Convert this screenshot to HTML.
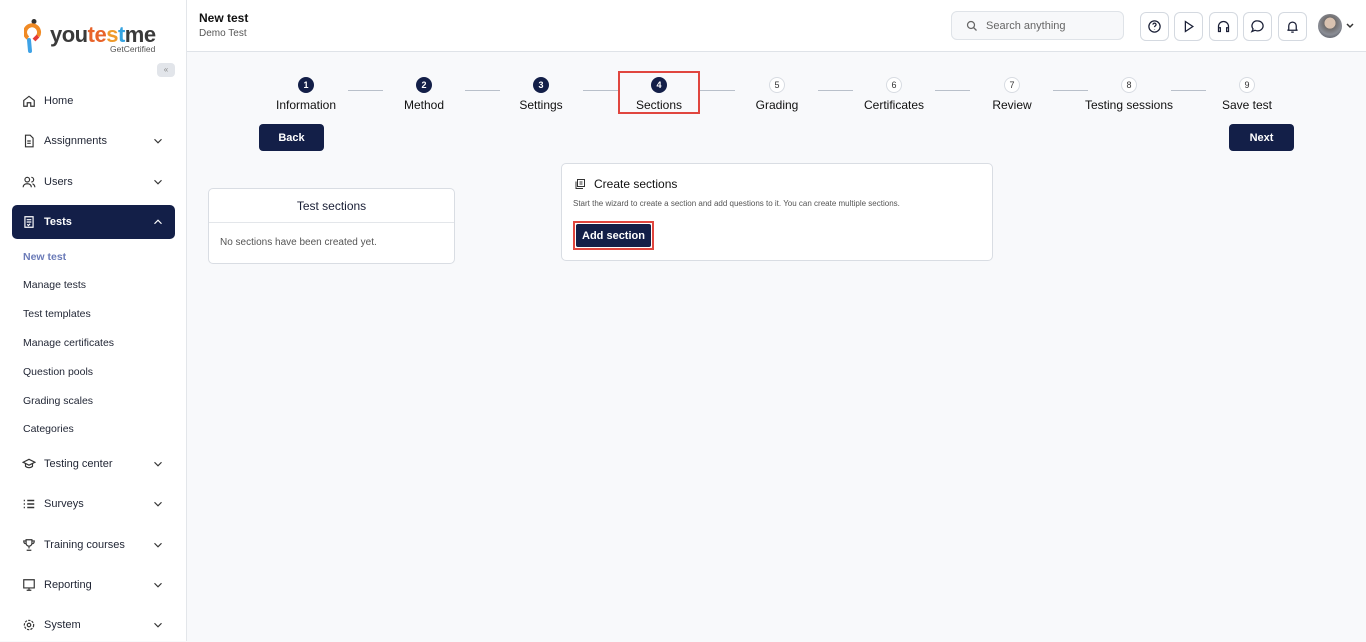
<!DOCTYPE html>
<html><head><style>
*{box-sizing:border-box;margin:0;padding:0}
body{width:1366px;height:641px;overflow:hidden;font-family:"Liberation Sans",sans-serif;background:#f8f9fb;position:relative;color:#1a1f36}
.sb{position:absolute;left:0;top:0;width:187px;height:641px;background:#fff;border-right:1px solid #e3e6ea}
.hd{position:absolute;left:187px;top:0;right:0;height:52px;background:#fff;border-bottom:1px solid #dfe3e8}
.nav{position:absolute;left:12px;width:163px;height:34px;display:flex;align-items:center;font-size:11px;color:#1f2433}
.nav svg{width:14px;height:14px;margin-left:10px;margin-right:8px}
.nav .ch{position:absolute;right:10px;top:10px;width:14px;height:14px;margin:0}
.sub{position:absolute;left:23px;font-size:10.5px;color:#1f2433}
.ib{position:absolute;top:12px;width:29px;height:29px;border:1px solid #d4d9e0;border-radius:6px;background:#fff;display:flex;align-items:center;justify-content:center}
.ib svg{width:15px;height:15px}
.st{position:absolute;top:77px;width:16px;height:16px;border-radius:50%;font-size:9px;font-weight:bold;display:flex;align-items:center;justify-content:center}
.st.a{background:#131f48;color:#fff}
.st.b{background:#fff;color:#333;border:1px solid #d8dce2;font-weight:normal}
.lb{position:absolute;top:98px;font-size:12px;color:#111;transform:translateX(-50%);white-space:nowrap}
.ln{position:absolute;top:90px;height:1px;background:#b9c0ca}
.btn{position:absolute;background:#131f48;color:#fff;font-size:11px;font-weight:bold;border-radius:4px;display:flex;align-items:center;justify-content:center}
.card{position:absolute;background:#fff;border:1px solid #d9dde3;border-radius:5px}
</style></head><body>
<div class="sb">
  <svg style="position:absolute;left:24px;top:18px" width="22" height="36" viewBox="0 0 22 36"><circle cx="10" cy="3.5" r="2.5" fill="#333"/><path d="M4 20 A7 7 0 1 1 14 18" stroke="#f08a24" stroke-width="4" fill="none"/><path d="M14 18 L10 22" stroke="#e53935" stroke-width="4"/><path d="M5 22 L6 33" stroke="#3ea2e6" stroke-width="4" stroke-linecap="round"/></svg>
  <div style="position:absolute;left:50px;top:22px;font-size:22px;font-weight:bold;letter-spacing:-0.5px;color:#3a3a3a">you<span style="color:#e8632a">te</span><span style="color:#ef9a2a">s</span><span style="color:#35a3e0">t</span>me</div>
  <div style="position:absolute;left:110px;top:44px;font-size:8.5px;color:#555">GetCertified</div>
  <div style="position:absolute;left:157px;top:63px;width:18px;height:14px;background:#e2e5ea;border-radius:4px;font-size:8px;color:#888;text-align:center;line-height:14px">«</div>
  <div class="nav" style="top:84px"><svg viewBox="0 0 24 24" fill="none" stroke="#333" stroke-width="2"><path d="M3 11l9-7 9 7v10h-6v-6h-6v6H3z"/></svg>Home</div>
  <div class="nav" style="top:124px"><svg viewBox="0 0 24 24" fill="none" stroke="#333" stroke-width="2"><path d="M6 2h8l5 5v15H6z"/><path d="M9 12h6M9 16h6"/></svg>Assignments<svg class="ch" viewBox="0 0 24 24" fill="none" stroke="#333" stroke-width="2"><path d="M6 9l6 6 6-6"/></svg></div>
  <div class="nav" style="top:165px"><svg viewBox="0 0 24 24" fill="none" stroke="#333" stroke-width="2"><circle cx="9" cy="8" r="4"/><path d="M2 21c0-4 3-6 7-6s7 2 7 6M16 4a4 4 0 010 8M22 21c0-3-2-5-4-6"/></svg>Users<svg class="ch" viewBox="0 0 24 24" fill="none" stroke="#333" stroke-width="2"><path d="M6 9l6 6 6-6"/></svg></div>
  <div class="nav" style="top:205px;background:#131f48;color:#fff;border-radius:5px;font-weight:bold"><svg viewBox="0 0 24 24" fill="none" stroke="#fff" stroke-width="2"><path d="M5 3h14v18H5z"/><path d="M8 8h8M8 12h8M9 16l2 2 3-3"/></svg>Tests<svg class="ch" viewBox="0 0 24 24" fill="none" stroke="#fff" stroke-width="2"><path d="M6 15l6-6 6 6"/></svg></div>
  <div class="sub" style="top:251px;color:#6b7bb8;font-weight:bold">New test</div>
  <div class="sub" style="top:279px">Manage tests</div>
  <div class="sub" style="top:308px">Test templates</div>
  <div class="sub" style="top:337px">Manage certificates</div>
  <div class="sub" style="top:366px">Question pools</div>
  <div class="sub" style="top:395px">Grading scales</div>
  <div class="sub" style="top:423px">Categories</div>
  <div class="nav" style="top:447px"><svg viewBox="0 0 24 24" fill="none" stroke="#333" stroke-width="2"><path d="M2 9l10-5 10 5-10 5z"/><path d="M6 11v5c3 3 9 3 12 0v-5"/></svg>Testing center<svg class="ch" viewBox="0 0 24 24" fill="none" stroke="#333" stroke-width="2"><path d="M6 9l6 6 6-6"/></svg></div>
  <div class="nav" style="top:487px"><svg viewBox="0 0 24 24" fill="none" stroke="#333" stroke-width="2.5"><path d="M3 6h2M9 6h12M3 12h2M9 12h12M3 18h2M9 18h12"/></svg>Surveys<svg class="ch" viewBox="0 0 24 24" fill="none" stroke="#333" stroke-width="2"><path d="M6 9l6 6 6-6"/></svg></div>
  <div class="nav" style="top:528px"><svg viewBox="0 0 24 24" fill="none" stroke="#333" stroke-width="2"><path d="M7 3h10v6a5 5 0 01-10 0zM7 5H3c0 4 2 5 4 5M17 5h4c0 4-2 5-4 5M12 14v4M8 21h8"/></svg>Training courses<svg class="ch" viewBox="0 0 24 24" fill="none" stroke="#333" stroke-width="2"><path d="M6 9l6 6 6-6"/></svg></div>
  <div class="nav" style="top:568px"><svg viewBox="0 0 24 24" fill="none" stroke="#333" stroke-width="2"><path d="M3 3h18v14H3zM8 21h8M12 17v4"/></svg>Reporting<svg class="ch" viewBox="0 0 24 24" fill="none" stroke="#333" stroke-width="2"><path d="M6 9l6 6 6-6"/></svg></div>
  <div class="nav" style="top:608px"><svg viewBox="0 0 24 24" fill="none" stroke="#333" stroke-width="2"><circle cx="12" cy="12" r="3"/><circle cx="12" cy="12" r="8" stroke-dasharray="4 2"/></svg>System<svg class="ch" viewBox="0 0 24 24" fill="none" stroke="#333" stroke-width="2"><path d="M6 9l6 6 6-6"/></svg></div>
</div>
<div class="hd">
  <div style="position:absolute;left:12px;top:11px;font-size:12px;font-weight:bold;color:#111">New test</div>
  <div style="position:absolute;left:12px;top:28px;font-size:10px;color:#555">Demo Test</div>
  <div style="position:absolute;left:764px;top:11px;width:173px;height:29px;border:1px solid #dfe3e8;border-radius:6px;background:#f7f8fa;font-size:11px;color:#666;padding:8px 0 0 34px">Search anything
    <svg style="position:absolute;left:14px;top:8px" width="12" height="12" viewBox="0 0 24 24" fill="none" stroke="#666" stroke-width="2.5"><circle cx="10" cy="10" r="7"/><path d="M15 15l6 6"/></svg></div>
  <div class="ib" style="left:953px"><svg viewBox="0 0 24 24" fill="none" stroke="#1a1f36" stroke-width="2"><circle cx="12" cy="12" r="9"/><path d="M9.5 9a2.5 2.5 0 115 0c0 2-2.5 2-2.5 4M12 17v.5"/></svg></div>
  <div class="ib" style="left:987px"><svg viewBox="0 0 24 24" fill="none" stroke="#1a1f36" stroke-width="2"><path d="M7 4l12 8-12 8z"/></svg></div>
  <div class="ib" style="left:1022px"><svg viewBox="0 0 24 24" fill="none" stroke="#1a1f36" stroke-width="2"><path d="M4 16v-4a8 8 0 0116 0v4M4 14h3v6H4zM17 14h3v6h-3z"/></svg></div>
  <div class="ib" style="left:1056px"><svg viewBox="0 0 24 24" fill="none" stroke="#1a1f36" stroke-width="2"><path d="M12 3a9 8 0 110 16c-2 0-3-.5-4-1l-5 2 2-4a8 8 0 017-13z"/></svg></div>
  <div class="ib" style="left:1091px"><svg viewBox="0 0 24 24" fill="none" stroke="#1a1f36" stroke-width="2"><path d="M6 17V11a6 6 0 0112 0v6l2 1H4zM10 21h4"/></svg></div>
  <div style="position:absolute;left:1131px;top:14px;width:24px;height:24px;border-radius:50%;background:radial-gradient(circle at 50% 38%,#d9c2b0 0 28%,#6f6c6c 30%,#8a8d95 60%,#3b3f4a 100%)"></div>
  <svg style="position:absolute;left:1159px;top:23px" width="8" height="6" viewBox="0 0 8 6" fill="none" stroke="#333" stroke-width="1.5"><path d="M1 1l3 3 3-3"/></svg>
</div>
<div class="ln" style="left:348px;width:35px"></div><div class="ln" style="left:465px;width:35px"></div><div class="ln" style="left:583px;width:35px"></div><div class="ln" style="left:700px;width:35px"></div><div class="ln" style="left:818px;width:35px"></div><div class="ln" style="left:935px;width:35px"></div><div class="ln" style="left:1053px;width:35px"></div><div class="ln" style="left:1171px;width:35px"></div>
<div class="st a" style="left:298px">1</div><div class="lb" style="left:306px">Information</div>
<div class="st a" style="left:416px">2</div><div class="lb" style="left:424px">Method</div>
<div class="st a" style="left:533px">3</div><div class="lb" style="left:541px">Settings</div>
<div class="st a" style="left:651px">4</div><div class="lb" style="left:659px">Sections</div>
<div class="st b" style="left:769px">5</div><div class="lb" style="left:777px">Grading</div>
<div class="st b" style="left:886px">6</div><div class="lb" style="left:894px">Certificates</div>
<div class="st b" style="left:1004px">7</div><div class="lb" style="left:1012px">Review</div>
<div class="st b" style="left:1121px">8</div><div class="lb" style="left:1129px">Testing sessions</div>
<div class="st b" style="left:1239px">9</div><div class="lb" style="left:1247px">Save test</div>
<div style="position:absolute;left:618px;top:71px;width:82px;height:43px;border:2px solid #e0463f"></div>
<div class="btn" style="left:259px;top:124px;width:65px;height:27px">Back</div>
<div class="btn" style="left:1229px;top:124px;width:65px;height:27px">Next</div>
<div class="card" style="left:208px;top:188px;width:247px;height:76px">
  <div style="height:34px;border-bottom:1px solid #e3e6ea;text-align:center;font-size:12px;line-height:34px;color:#1a1f36">Test sections</div>
  <div style="padding:14px 0 0 11px;font-size:10px;color:#555">No sections have been created yet.</div>
</div>
<div class="card" style="left:561px;top:163px;width:432px;height:98px">
  <svg style="position:absolute;left:12px;top:14px" width="13" height="12" viewBox="0 0 24 24" fill="none" stroke="#333" stroke-width="2"><path d="M6 3h14v14H6zM3 7v14h14M10 8h6M10 12h6"/></svg>
  <div style="position:absolute;left:32px;top:13px;font-size:12px;color:#111">Create sections</div>
  <div style="position:absolute;left:11px;top:35px;font-size:8px;color:#555">Start the wizard to create a section and add questions to it. You can create multiple sections.</div>
  <div style="position:absolute;left:11px;top:57px;width:81px;height:29px;border:2px solid #e0463f"><div class="btn" style="left:1px;top:1px;width:75px;height:23px;border-radius:2px">Add section</div></div>
</div>
</body></html>
